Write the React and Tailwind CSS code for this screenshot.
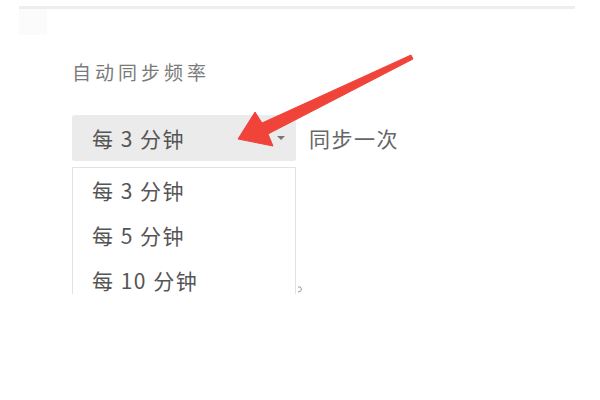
import React from 'react'

const font = { fontFamily: '"Noto Sans CJK SC", "Noto Sans", sans-serif' }
const options = ['每 3 分钟', '每 5 分钟', '每 10 分钟']

function Arrow() {
  return (
    <svg className="absolute left-0 top-0 pointer-events-none" width="600" height="400" viewBox="0 0 600 400">
      <path
        d="M238 139 L255 112 L262 123 L411 55 L413 59 L268 134 L273 146 Z"
        fill="#f0443a"
        stroke="#f0443a"
        strokeWidth="1"
        strokeLinejoin="round"
      />
    </svg>
  )
}

export default function App() {
  return (
    <div className="relative w-[600px] h-[400px] bg-white overflow-hidden" style={font}>
      <div className="ml-[19px] mt-[6px] w-[556px] h-[3px] bg-[#eeeeee]" />
      <div className="ml-[19px] w-[28px] h-[26px] bg-[#fbfbfb]" />

      <div className="h-[259px] overflow-hidden pl-[72px]">
        <div className="mt-[27px] text-[19px] leading-none tracking-[4px] text-[#7a7a7a]">
          自动同步频率
        </div>

        <div className="mt-[34px] flex items-center">
          <div className="w-[224px] h-[46px] rounded-[3px] bg-[#ebebeb] flex items-center justify-between pl-[20px] pr-[11px]">
            <span className="text-[21px] leading-none tracking-[1.5px] text-[#555]">每 3 分钟</span>
            <span className="w-0 h-0 border-l-[4px] border-r-[4px] border-t-[4px] border-l-transparent border-r-transparent border-t-[#777]" />
          </div>
          <span className="ml-[13px] text-[21px] leading-none tracking-[1.5px] text-[#666]">同步一次</span>
        </div>

        <div className="relative mt-[6px] w-[224px] border border-[#e2e2e2] bg-white">
          {options.map(o => (
            <div key={o} className="h-[45px] flex items-center pl-[19px] text-[21px] leading-none tracking-[1.5px] text-[#555]">
              {o}
            </div>
          ))}
          {/* clipped fragment of whatever sits behind the menu */}
          <svg className="absolute -right-[8px] top-[117px]" width="6" height="8" viewBox="0 0 6 8">
            <path d="M1 2 Q4 1 4.5 4 Q4.5 7 1 7" fill="none" stroke="#999" strokeWidth="1" />
          </svg>
        </div>
      </div>

      <Arrow />
    </div>
  )
}
